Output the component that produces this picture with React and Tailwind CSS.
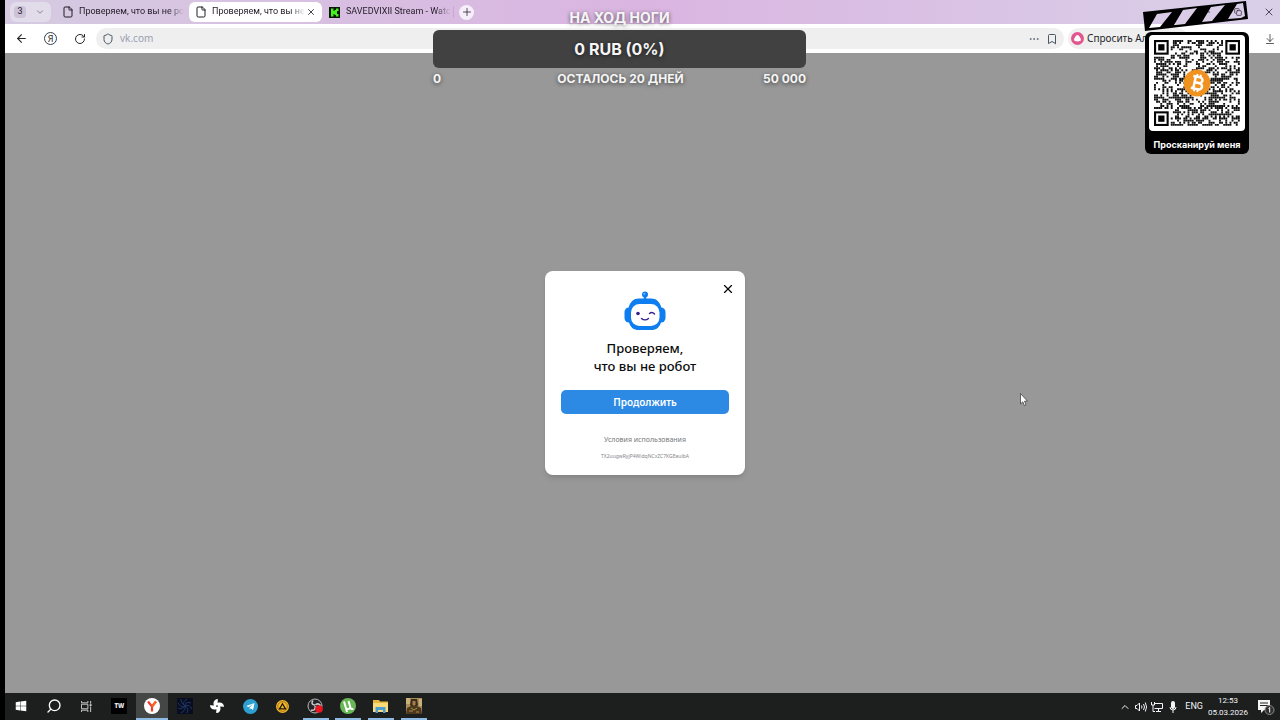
import React from "react";
import {
  ArrowLeft,
  ArrowDownToLine,
  Bookmark,
  ChevronDown,
  ChevronUp,
  Copy,
  Ellipsis,
  File,
  Minus,
  Plus,
  RotateCw,
  Search,
  Shield,
  X,
} from "lucide-react";
import { FaFan, FaTelegramPlane, FaWindows } from "react-icons/fa";

const QR_SIZE = 41;

// Finder squares stay in three corners, the rest is a repeatable noise pattern
const isFinder = (x, y) => {
  const last = QR_SIZE - 8;
  return (x < 8 && y < 8) || (x >= last && y < 8) || (x < 8 && y >= last);
};

const buildQrPath = () => {
  let seed = 20260305;
  let d = "";
  for (let y = 0; y < QR_SIZE; y++) {
    for (let x = 0; x < QR_SIZE; x++) {
      seed = (seed * 1103515245 + 12345) % 2147483648;
      if (isFinder(x, y)) continue;
      if (seed / 2147483648 < 0.52) d += `M${x} ${y}h.9v.9h-.9z`;
    }
  }
  return d;
};

const qrPath = buildQrPath();

const QrCode = () => (
  <svg viewBox="0 0 41 41" className="w-full" aria-label="QR">
    <path d={qrPath} fill="#111" />
    {[[0, 0], [34, 0], [0, 34]].map(([x, y]) => (
      <g key={`${x}-${y}`} fill="#050505">
        <rect x={x} y={y} width="7" height="7" />
        <rect x={x + 1} y={y + 1} width="5" height="5" fill="#fff" />
        <rect x={x + 2} y={y + 2} width="3" height="3" />
      </g>
    ))}
    <circle cx="20.5" cy="20.5" r="6.4" fill="#f0921f" />
    <g transform="translate(20.7 20.5) rotate(12)" fill="none" stroke="#fff" strokeWidth="1.2">
      <path d="M-2.6-2.9H.7a1.4 1.4 0 0 1 0 2.8H-1.2M-1.4-2.9V2.9M-2.6 2.9H1a1.5 1.5 0 0 0 0-3H-1.2" />
      <path d="M-.8-4.2V-2.9M.8-4.2V-2.9M-.8 2.9V4.2M.8 2.9V4.2" strokeWidth="0.9" />
    </g>
  </svg>
);

const Clapper = () => (
  <svg viewBox="0 0 106 32" className="block w-[106px] h-8">
    <path
      fillRule="evenodd"
      fill="#000"
      d="M0 12 103 1 105 19 2 31ZM14 14 29 12 17 27 6 28ZM40 10 54 8 42 24 31 25ZM68 7 82 5 69 21 59 22ZM94 4 100 3 102 16 98 18 85 19Z"
    />
  </svg>
);

const Robot = () => (
  <svg viewBox="0 0 42 40" className="w-[42px] h-10">
    <circle cx="21" cy="3.5" r="3" fill="#0d7df0" />
    <circle cx="20.3" cy="2.8" r="0.9" fill="#8fc6ff" />
    <path d="M19.8 5h2.4v4h-2.4z" fill="#0d7df0" />
    <rect x="0.5" y="16.5" width="9" height="15" rx="4.5" fill="#0d7df0" />
    <rect x="32.5" y="16.5" width="9" height="15" rx="4.5" fill="#0d7df0" />
    <path d="M15 7.5h12c5.5 0 8.5 3.5 10 8 1.6 5 1.6 12 0 16-1.6 5-4.5 7.5-10 7.5H15c-5.5 0-8.4-2.5-10-7.5-1.6-4-1.6-11 0-16 1.5-4.5 4.5-8 10-8z" fill="#0d7df0" />
    <rect x="7" y="13" width="28.5" height="22" rx="8.5" fill="#fff" />
    <circle cx="14" cy="22.5" r="1.8" fill="#341f8f" />
    <path d="M17.5 27.5c2 1.8 5 1.8 7 0M25.5 22.5c1.5-1.3 3.5-1.2 5 .5" fill="none" stroke="#341f8f" strokeWidth="1.4" strokeLinecap="round" />
  </svg>
);

const KickLogo = () => (
  <svg viewBox="0 0 11 11" className="size-[11px] shrink-0">
    <rect width="11" height="11" fill="#0a1508" />
    <path d="M2 1.5h2.5v2.5h1V3h1.500V1.500H9.500v2.500H8v3h1.500v2.500H7V8H5.500V7h-1v2.500H2z" fill="#43f21c" />
  </svg>
);

const YandexLogo = () => (
  <svg viewBox="0 0 16 16" className="size-4">
    <circle cx="8" cy="8" r="8" fill="#fff" />
    <path d="M4 3.5 8 8.5 12 3.5M8 8v5.5" fill="none" stroke="#ed3b2f" strokeWidth="2.2" />
    <path d="M8 8.5 12 3.5" stroke="#f26a1b" strokeWidth="2.2" />
  </svg>
);

const TaskView = () => (
  <svg viewBox="0 0 12 12" className="size-[11px]" fill="none" stroke="#d5d5d5">
    <path d="M.5 3.5h7v5h-7zM.5 0v2h7V0M.5 12v-2h7v2M10.5 0v3M10.5 6v6" />
    <path d="M9.5 3.5h2v2h-2z" fill="#d5d5d5" stroke="none" />
  </svg>
);

const Swirl = () => (
  <svg viewBox="0 0 16 16" className="size-4">
    <rect width="16" height="16" fill="#080d20" />
    <path d="M8 8C5 6 7 3 10 1M8 8c3-2 5 0 7 3M8 8c1 3-1 5-4 7M8 8C5 10 3 8 1 5M8 8c0-4 3-4 6-3M8 8c4 2 3 4 2 7M8 8c-2 3-5 3-7 2M8 8C5 5 4 4 4 1" fill="none" stroke="#22386b" />
  </svg>
);

const Aimp = () => (
  <svg viewBox="0 0 14 14" className="size-[13px]">
    <circle cx="7" cy="7" r="7" fill="#f6b72a" />
    <circle cx="7" cy="7" r="5.2" fill="none" stroke="#5c430a" strokeWidth="0.6" />
    <path d="M7 4 10.2 9.5H3.8z" fill="none" stroke="#1c1708" strokeWidth="1.4" />
  </svg>
);

const Obs = () => (
  <svg viewBox="0 0 17 16" className="w-[17px] h-4">
    <circle cx="8" cy="8" r="7" fill="#24242a" stroke="#b9b9b9" />
    <path d="M8 7C5 7 4 5 6 2.5M8.5 7c2-2 4.5-1 5 1.5M8 8c1 3-1 5-4 4" fill="none" stroke="#c8c8c8" strokeWidth="1.6" />
    <circle cx="12" cy="11" r="3.8" fill="#ea1620" />
  </svg>
);

const Utorrent = () => (
  <svg viewBox="0 0 16 16" className="size-4">
    <circle cx="8" cy="8" r="8" fill="#69b657" />
    <path d="M4 3.5 5.8 9.5c.7 2.2 3.7 2 4.4 0M8.5 3l1.9 6.5c.4 1.5 1.5 1.8 3 1.2M6 10l1 4" fill="none" stroke="#fff" strokeWidth="2" />
  </svg>
);

const Explorer = () => (
  <svg viewBox="0 0 15 13" className="w-[15px] h-[13px]">
    <path d="M0 0h6l1 1.5h8V12H0z" fill="#e9b93f" />
    <path d="M0 3h15v9H0z" fill="#fbdb79" />
    <path d="M2.5 7h10v6H10v-3H5v3H2.5z" fill="#4a9ed4" />
  </svg>
);

const Portrait = () => (
  <svg viewBox="0 0 16 16" className="size-4">
    <rect width="16" height="16" fill="#a88c5b" />
    <path d="M0 0h4v6H0zM13 1h3v7h-3z" fill="#c9b17b" />
    <path d="M5 1h6l1 6-2 2H6L4 7z" fill="#3d2b1c" />
    <path d="M6.5 3h3v3.5L8 8 6.5 6.5z" fill="#a77b4a" />
    <path d="M0 16l1-6 4-2h6l4 2 1 6z" fill="#4b3920" />
    <path d="M5 10l3 2 3-2M3 13h4M10 14h3" stroke="#b48c3c" fill="none" />
  </svg>
);

const taskbarApps = [
  { name: "Пуск", icon: <FaWindows className="size-3 text-white" /> },
  { name: "Поиск", icon: <Search className="size-4 -scale-x-100 text-white" strokeWidth={2} /> },
  { name: "Представление задач", icon: <TaskView /> },
  {
    name: "TW",
    icon: (
      <span className="flex size-4 items-center justify-center bg-black text-[6px] font-black text-gray-200">
        TW
      </span>
    ),
  },
  { name: "Яндекс Браузер", icon: <YandexLogo />, running: true, active: true },
  { name: "Swirl", icon: <Swirl /> },
  { name: "Fan", icon: <FaFan className="size-[14px] text-white" /> },
  {
    name: "Telegram",
    icon: (
      <span className="flex size-[15px] items-center justify-center rounded-full bg-[#2d9fd0]">
        <FaTelegramPlane className="size-[9px] text-white" />
      </span>
    ),
  },
  { name: "AIMP", icon: <Aimp /> },
  { name: "OBS", icon: <Obs />, running: true },
  { name: "uTorrent", icon: <Utorrent />, running: true },
  { name: "Проводник", icon: <Explorer />, running: true },
  { name: "Игра", icon: <Portrait />, running: true },
];

const TabBar = () => (
  <div className="flex h-6 shrink-0 items-center bg-linear-to-r from-[#d5cae1] via-[#dab5e1] to-[#d9d0e8] pl-[5px] pr-1 font-['Roboto',sans-serif] text-[9px] text-[#201a26]">
    <div className="flex h-5 w-[41px] shrink-0 items-center justify-between rounded-md bg-[#e2dbe9] pl-1 pr-1.5">
      <button className="flex h-3 w-3 items-center justify-center rounded-sm bg-[#cdc2d8]">3</button>
      <button aria-label="Список вкладок"><ChevronDown className="size-2.5 text-gray-500" strokeWidth={2} /></button>
    </div>
    <button className="ml-[11px] flex h-5 w-[123px] shrink-0 items-center gap-[5px] whitespace-nowrap">
      <File className="size-3 shrink-0" />
      <span className="mask-r-from-85%">Проверяем, что вы не ро</span>
    </button>
    <div className="ml-1 flex h-5 w-[133px] shrink-0 items-center justify-between rounded-md bg-white pl-1.5 pr-1.5">
      <button className="flex items-center gap-[5px] whitespace-nowrap">
        <File className="size-3 shrink-0" />
        <span className="mask-r-from-85%">Проверяем, что вы не</span>
      </button>
      <button aria-label="Закрыть вкладку"><X className="size-2.5" /></button>
    </div>
    <button className="ml-[7px] flex h-5 w-[120px] shrink-0 items-center gap-1.5 whitespace-nowrap">
      <KickLogo />
      <span className="mask-r-from-85%">SAVEDVIXII Stream - Watc</span>
    </button>
    <span className="ml-1 h-3 w-px bg-[#c8a7d0]" />
    <button aria-label="Новая вкладка" className="ml-[5px] flex size-[15px] items-center justify-center rounded-full bg-[#f6eef9]">
      <Plus className="size-3" strokeWidth={1.5} />
    </button>
    <div className="ml-auto flex w-[76px] items-center justify-between pr-px">
      <button aria-label="Свернуть"><Minus className="size-3" strokeWidth={1.5} /></button>
      <button aria-label="Развернуть"><Copy className="size-2" /></button>
      <button aria-label="Закрыть"><X className="size-3" strokeWidth={1.5} /></button>
    </div>
  </div>
);

const AddressBar = () => (
  <div className="flex h-[29px] shrink-0 items-center bg-white pl-2.5 text-[10px] text-[#26262a]">
    <button aria-label="Назад"><ArrowLeft className="size-[13px]" /></button>
    <button className="ml-4 flex size-[13px] items-center justify-center rounded-full border border-gray-700 text-[9px] leading-none">Я</button>
    <button aria-label="Обновить" className="ml-[17px]"><RotateCw className="size-3" /></button>
    <div className="ml-2.5 flex h-[21px] flex-1 items-center rounded-xl bg-[#efefef] pl-1.5 pr-1.5">
      <Shield className="size-3 text-gray-600" />
      <input aria-label="Адрес" defaultValue="vk.com" className="ml-1.5 min-w-0 flex-1 bg-transparent text-[10px] text-gray-400 outline-none" />
      <button aria-label="Ещё"><Ellipsis className="size-3 text-gray-500" /></button>
      <button aria-label="Закладка" className="ml-1.5"><Bookmark className="size-3 text-gray-600" /></button>
    </div>
    <button className="ml-1 flex h-[21px] w-[120px] items-center rounded-xl bg-[#efefef] pl-[3px] whitespace-nowrap">
      <svg viewBox="0 0 13 13" className="mr-[3px] size-[13px] shrink-0">
        <circle cx="6.5" cy="6.5" r="6.5" fill="#e2568f" />
        <path d="M6.5 3c1.3 0 3.8 3.8 3.4 5.3C9.5 9.8 3.5 9.8 3.1 8.3 2.7 6.8 5.2 3 6.5 3z" fill="#fff" />
      </svg>
      Спросить Алису
    </button>
    <button aria-label="Загрузки" className="ml-[76px] pr-1"><ArrowDownToLine className="size-3" strokeWidth={1.5} /></button>
  </div>
);

const CaptchaDialog = () => (
  <section role="dialog" aria-labelledby="captcha-title" className="relative flex w-[200px] flex-col items-center rounded-lg bg-white px-4 pt-5 pb-[14px] text-center shadow-md">
    <button aria-label="Закрыть" className="absolute top-[11px] right-2.5"><X className="size-[14px] text-black" strokeWidth={2} /></button>
    <Robot />
    <h1 id="captcha-title" className="mt-2 text-[13px] leading-[18px] font-medium text-[#0c0c0c]">
      Проверяем,
      <br />
      что вы не робот
    </h1>
    <button className="mt-[15px] h-6 w-full rounded-[5px] bg-[#2d8ae4] text-[10px] font-semibold text-white">Продолжить</button>
    <a href="#terms" className="mt-5 text-[7px] leading-3 text-[#77797c]">Условия использования</a>
    <p className="mt-[5px] text-[5px] leading-2.5 text-[#85878a]">TX2uugwRyjP4WidqNCxZC7KGEeuibA</p>
  </section>
);

const DonationGoal = () => (
  <div className="absolute top-[9px] left-[433px] w-[373px] font-['Inter',sans-serif] font-bold text-[#f5f5f5] [text-shadow:0_1px_4px_#0009]">
    <p className="text-center text-sm leading-[18px]">НА ХОД НОГИ</p>
    <div className="mt-[3px] flex h-[38px] items-center justify-center rounded-md bg-[#414141] text-base">0 RUB (0%)</div>
    <div className="mt-0.5 grid grid-cols-3 text-[12px] leading-[18px]">
      <span>0</span>
      <span className="text-center whitespace-nowrap">ОСТАЛОСЬ 20 ДНЕЙ</span>
      <span className="text-right">50 000</span>
    </div>
  </div>
);

const QrWidget = () => (
  <div className="absolute top-0 right-[31px] w-[104px]">
    <div className="-ml-0.5"><Clapper /></div>
    <div className="rounded-md bg-black px-1 pt-[3px] pb-0.5">
      <div className="rounded-sm bg-white px-[5px] py-[5px]">
        <QrCode />
      </div>
      <p className="pt-1.5 text-center text-[9px] leading-[15px] font-bold whitespace-nowrap text-white font-['Inter',sans-serif]">Просканируй меня</p>
    </div>
  </div>
);

const Tray = () => (
  <div className="ml-auto flex items-center font-['Roboto',sans-serif] text-[9px] text-gray-100">
    <button aria-label="Скрытые значки"><ChevronUp className="size-3" /></button>
    <svg viewBox="0 0 12 12" className="ml-1 size-3" fill="none" stroke="currentColor">
      <path d="M.5 4.5H2L4.5 2v8L2 7.5H.5zM6.5 4.5q1 1.5 0 3M8.5 3q2 3 0 6M10.3 1.5q2.5 4.5 0 9" />
    </svg>
    <svg viewBox="0 0 12 12" className="ml-1 size-3" fill="none" stroke="currentColor">
      <path d="M3.5 2.5h8v5h-8M7.5 7.5v3M5 10.5h5M.5 1v3h3V1M2 4v6.5h2" />
    </svg>
    <svg viewBox="0 0 8 12" className="ml-1.5 h-3 w-2" fill="currentColor">
      <rect x="2" width="4" height="8" rx="2" />
      <path d="M1 6q0 3 3 3t3-3M4 9v3" fill="none" stroke="currentColor" />
    </svg>
    <span className="mr-1 ml-2">ENG</span>
    <div className="w-[42px] text-center text-[8px] leading-3">
      <div>12:53</div>
      <div>05.03.2026</div>
    </div>
    <button aria-label="Уведомления" className="mr-[5px] ml-2 flex">
      <svg viewBox="0 0 18 16" className="h-4 w-[18px]">
        <path d="M1 1h12v10H7l-3 3v-3H1z" fill="#f5f5f5" />
        <path d="M3 4h8M3 6.5h8" stroke="#222" />
        <circle cx="12.5" cy="11" r="4.5" fill="#303030" stroke="#8c8c8c" />
        <path d="M11.5 9.5l1.2-1v5" fill="none" stroke="#fff" />
      </svg>
    </button>
  </div>
);

const Taskbar = () => (
  <footer className="flex h-[27px] shrink-0 items-stretch bg-[#1d1e1e]">
    <nav className="grid w-[425px] grid-cols-13">
      {taskbarApps.map((app) => (
        <button
          key={app.name}
          aria-label={app.name}
          className={`flex flex-col items-center ${app.active ? "bg-[#454646]" : ""}`}
        >
          <span className="flex flex-1 items-center justify-center pt-px">{app.icon}</span>
          <span className={`h-0.5 ${app.active ? "w-full" : "w-[26px]"} ${app.running ? "bg-[#8dbbe4]" : ""}`} />
        </button>
      ))}
    </nav>
    <Tray />
  </footer>
);

const App = () => {
  return (
    <div className="relative flex h-screen flex-col overflow-hidden border-l-[5px] border-black bg-[#989898] font-['Noto_Sans',sans-serif]">
      <TabBar />
      <AddressBar />
      <main className="flex flex-1 items-center justify-center pl-[5px]">
        <CaptchaDialog />
      </main>
      <Taskbar />

      {/* Stream overlays */}
      <div className="pointer-events-none absolute inset-y-0 right-0 -left-[5px]">
        <DonationGoal />
        <QrWidget />
        <svg viewBox="0 0 8 13" className="absolute top-[393px] left-[1020px] h-[13px] w-2">
          <path d="M.5.5v10.5l2.3-2.2L4.4 12.5 6 11.8 4.5 8.2h3z" fill="#fff" stroke="#333" strokeWidth="0.7" />
        </svg>
      </div>
    </div>
  );
};

export default App;
